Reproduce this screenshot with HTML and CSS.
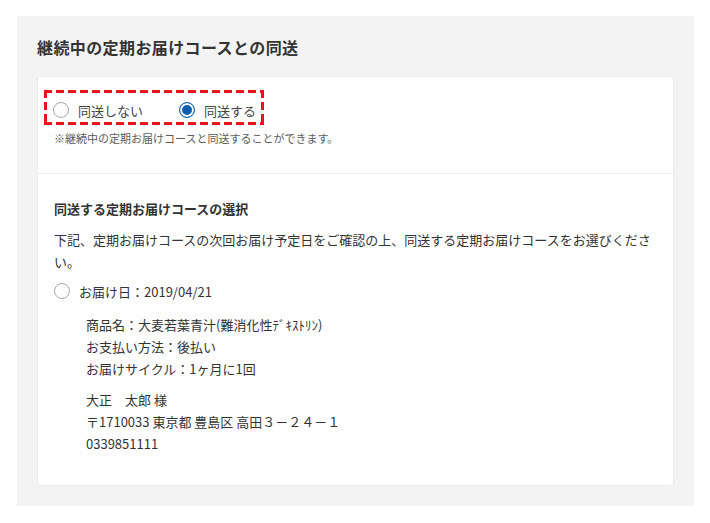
FILE: index.html
```html
<!DOCTYPE html>
<html lang="ja">
<head>
<meta charset="utf-8">
<link rel="stylesheet" href="styles.css">
</head>
<body>
<div class="panel">
  <h2 class="title">継続中の定期お届けコースとの同送</h2>
  <div class="card">
    <div class="sec-top">
      <div class="choice">
        <label class="radio"><span class="dot"></span><span class="rtext">同送しない</span></label>
        <label class="radio"><span class="dot on"></span><span class="rtext">同送する</span></label>
      </div>
      <p class="note">※継続中の定期お届けコースと同送することができます。</p>
    </div>
    <div class="sec-bottom">
      <h3 class="sub">同送する定期お届けコースの選択</h3>
      <p class="desc">下記、定期お届けコースの次回お届け予定日をご確認の上、同送する定期お届けコースをお選びください。</p>
      <label class="radio date"><span class="dot"></span><span class="rtext">お届け日：2019/04/21</span></label>
      <div class="detail">
        <p class="line">商品名：大麦若葉青汁(難消化性ﾃﾞｷｽﾄﾘﾝ)</p>
        <p class="line">お支払い方法：後払い</p>
        <p class="line">お届けサイクル：1ヶ月に1回</p>
        <div class="addr">
          <p class="line">大正　太郎 様</p>
          <p class="line">〒1710033 東京都 豊島区 高田３－２４－１</p>
          <p class="line">0339851111</p>
        </div>
      </div>
    </div>
  </div>
</div>
</body>
</html>
```

FILE: styles.css
```css
* { box-sizing: border-box; }
html, body { margin: 0; padding: 0; background: #fff; }
body {
  font-family: "Noto Sans CJK JP", "Noto Sans", sans-serif;
  color: #333;
}
.panel {
  margin: 16px 16px 17px 17px;
  width: 677px;
  height: 490px;
  background: #f3f3f3;
  padding: 19px 20px 20px;
}
.title {
  margin: 0 0 17px;
  font-size: 16px;
  line-height: 24px;
  font-weight: bold;
  letter-spacing: 0.4px;
  color: #333;
}
.card {
  background: #fff;
  border: 1px solid #ebebeb;
  border-radius: 3px;
  height: 410px;
}
.sec-top {
  padding: 13px 16px 27px;
  border-bottom: 1px solid #ededed;
}
.choice {
  display: flex;
  gap: 36px;
  width: fit-content;
  margin-left: -10px;
  padding: 10px 8px 5px 9px;
  background:
    repeating-linear-gradient(90deg, #e8141b 0 8px, transparent 8px 12px) left top / 100% 3px no-repeat,
    repeating-linear-gradient(90deg, #e8141b 0 8px, transparent 8px 12px) left bottom / 100% 3px no-repeat,
    repeating-linear-gradient(180deg, #e8141b 0 8px, transparent 8px 12px) left top / 3px 100% no-repeat,
    repeating-linear-gradient(180deg, #e8141b 0 8px, transparent 8px 12px) right top / 3px 100% no-repeat;
}
.radio {
  display: flex;
  align-items: center;
  gap: 9px;
  height: 20px;
  font-size: 13px;
  color: #444;
}
.dot {
  width: 16px;
  height: 16px;
  border-radius: 50%;
  border: 1px solid #a9a9a9;
  background: #fff;
  flex: none;
}
.dot.on {
  border: 1px solid #1565b8;
  background: #0a5fb0;
  box-shadow: inset 0 0 0 2px #fff;
}
.note {
  margin: 5px 0 0;
  font-size: 11px;
  line-height: 16px;
  color: #5a5a5a;
}
.sec-bottom {
  padding: 25px 16px 0;
}
.sub {
  margin: 0 0 10px;
  font-size: 13px;
  line-height: 20px;
  font-weight: bold;
  color: #333;
}
.desc {
  margin: 0;
  font-size: 13px;
  line-height: 22px;
  color: #333;
}
.radio.date {
  margin-top: 8px;
  color: #333;
}
.detail {
  margin-top: 13px;
  padding-left: 32px;
}
.line {
  margin: 0;
  font-size: 13px;
  line-height: 22px;
  color: #333;
}
.addr {
  margin-top: 9px;
}
```
